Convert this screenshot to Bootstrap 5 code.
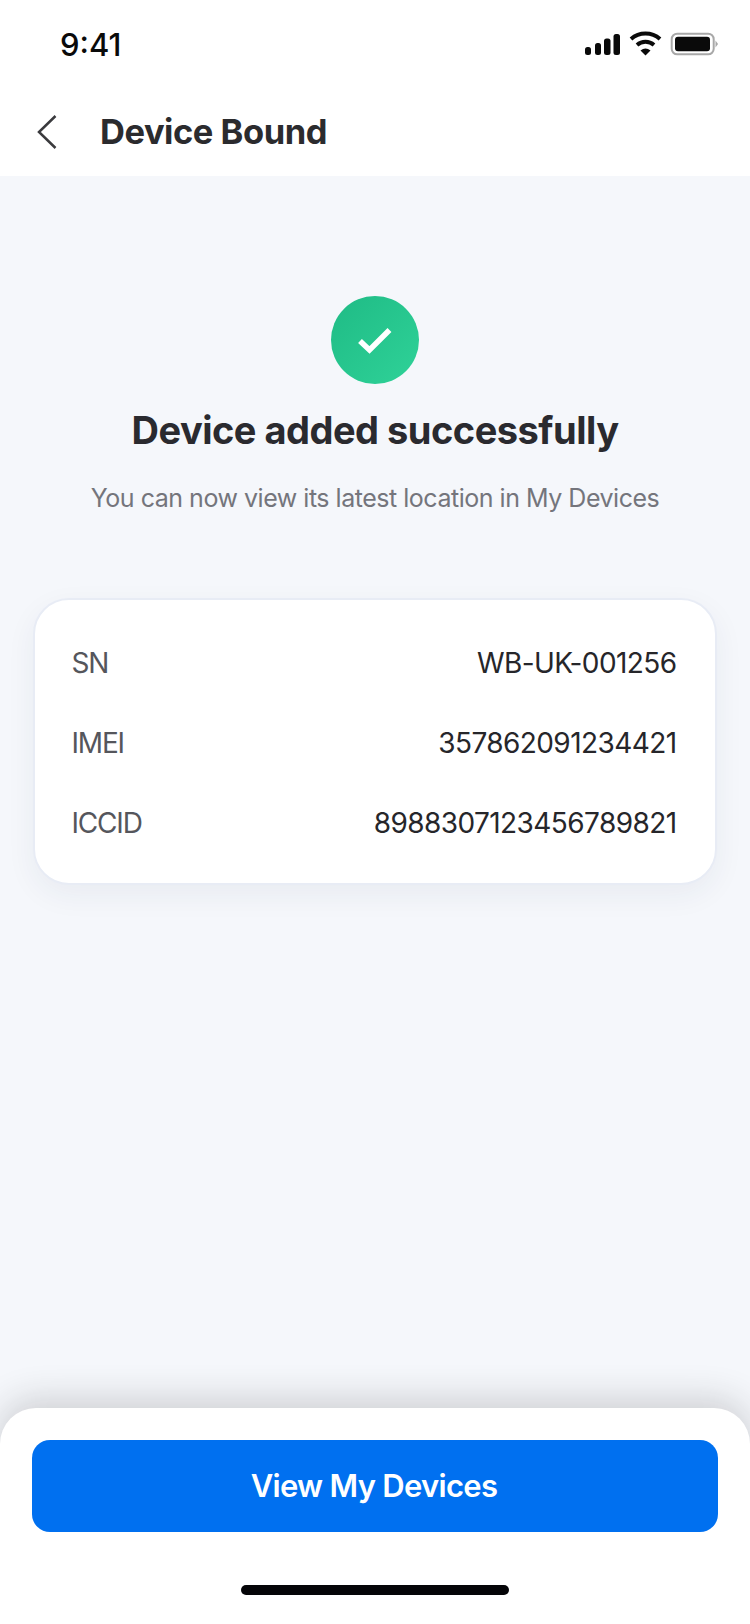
<!DOCTYPE html>
<html lang="en">
<head>
<meta charset="utf-8">
<title>Device Bound</title>
<link href="https://cdn.jsdelivr.net/npm/bootstrap@5.3.0/dist/css/bootstrap.min.css" rel="stylesheet">
<style>
html, body { margin: 0; height: 1624px; overflow: hidden; }
body { font-family: Inter, "Liberation Sans", sans-serif; background: #f5f7fb; }
.screen { width: 750px; height: 1624px; }
.status-strip { height: 88px; padding: 0 30px 0 60px; padding-top: 21px; }
.clock { font-size: 31px; font-weight: 500; color: #0a0a0a; line-height: 48px; letter-spacing: 0; }
.status-icons { margin: 10px 1px 0 0; }
.top-head { height: 88px; padding-left: 36px; }
.back-link { width: 24px; line-height: 0; margin-right: 40px; }
.head-title { font-size: 34.5px; font-weight: 700; color: #2b2b2e; letter-spacing: -0.47px; margin: 0; }
.body-area { padding: 120px 33px 0; }
.ok-disc { width: 88px; height: 88px; border-radius: 50%; background: linear-gradient(135deg, #1fbb85, #2fd298); }
.done-title { font-size: 38px; font-weight: 700; color: #2a2a2f; letter-spacing: -0.5px; line-height: 48px; margin: 22px 0 0; }
.done-sub { font-size: 25px; color: #74757c; letter-spacing: -0.48px; line-height: 36px; margin: 26px 0 0; }
.info-panel { margin-top: 82px; height: 287px; border: 2px solid #e8ecf5; border-radius: 36px; padding: 23px 38.5px 0 36.5px; box-shadow: 0 10px 30px rgba(40, 50, 80, .06); }
.info-row { height: 80px; }
.info-key { font-size: 28px; color: #55565c; letter-spacing: -1.2px; }
.info-val { font-size: 28px; font-weight: 400; color: #26262a; letter-spacing: -0.58px; }
.bottom-sheet { height: 216px; border-radius: 36px 36px 0 0; padding: 32px 32px 0; box-shadow: 0 -8px 36px rgba(30, 30, 30, .19); }
.go-btn { height: 92px; border-radius: 18px; background: #0070f0; border: 0; color: #fff; font-size: 31px; font-weight: 600; letter-spacing: -0.7px; padding-right: 14px; }
.go-btn:hover { background: #0070f0; color: #fff; }
.home-pill { width: 268px; height: 10px; border-radius: 5px; background: #050508; margin: 53px auto 0; }
</style>
</head>
<body>
<div class="screen d-flex flex-column">
  <div class="bg-white">
    <div class="status-strip d-flex justify-content-between align-items-start">
      <span class="clock">9:41</span>
      <!-- signal, wifi and battery indicators -->
      <svg class="status-icons" width="140" height="30" viewBox="0 0 140 30" aria-hidden="true">
        <rect x="6" y="16" width="6" height="8" rx="2.5" fill="#0a0a0a"/>
        <rect x="16" y="12" width="6" height="12" rx="2.5" fill="#0a0a0a"/>
        <rect x="25" y="7.500" width="6.5" height="16.5" rx="2.5" fill="#0a0a0a"/>
        <rect x="34.500" y="3" width="6.5" height="21" rx="2.5" fill="#0a0a0a"/>
        <path d="M52 8 a22 22 0 0 1 29 0" fill="none" stroke="#0a0a0a" stroke-width="4"/>
        <path d="M58 14 a13 13 0 0 1 17 0" fill="none" stroke="#0a0a0a" stroke-width="4"/>
        <path d="M61.500 19.500 a8 8 0 0 1 10 0 L66.500 24.500 Z" fill="#0a0a0a"/>
        <rect x="92.700" y="2.700" width="42" height="20.600" rx="5.500" fill="none" stroke="#a8a8a8" stroke-width="2"/>
        <rect x="96" y="5.700" width="35" height="14.600" rx="3" fill="#0a0a0a"/>
        <path d="M136.500 9.500 L139 13 L136.500 16.500 Z" fill="#a8a8a8"/>
      </svg>
    </div>
    <div class="top-head d-flex align-items-center">
      <a class="back-link" href="#" aria-label="Back">
        <svg width="24" height="36" viewBox="0 0 24 36" aria-hidden="true"><path d="M19.500 2 L3 18 L19.500 34" fill="none" stroke="#3a3a3d" stroke-width="2.500"/></svg>
      </a>
      <h1 class="head-title">Device Bound</h1>
    </div>
  </div>

  <main class="body-area flex-grow-1">
    <div class="text-center">
      <div class="ok-disc d-flex align-items-center justify-content-center mx-auto">
        <svg width="36" height="28" viewBox="0 0 36 28" aria-hidden="true"><path d="M3 15 L12.500 24 L32.500 4" fill="none" stroke="#fff" stroke-width="5.500"/></svg>
      </div>
      <h2 class="done-title">Device added successfully</h2>
      <p class="done-sub">You can now view its latest location in My Devices</p>
    </div>
    <div class="info-panel bg-white">
      <div class="info-row d-flex justify-content-between align-items-center"><span class="info-key">SN</span><span class="info-val">WB-UK-001256</span></div>
      <div class="info-row d-flex justify-content-between align-items-center"><span class="info-key">IMEI</span><span class="info-val">357862091234421</span></div>
      <div class="info-row d-flex justify-content-between align-items-center"><span class="info-key">ICCID</span><span class="info-val">8988307123456789821</span></div>
    </div>
  </main>

  <footer class="bottom-sheet bg-white">
    <button type="button" class="btn go-btn w-100">View My Devices</button>
    <div class="home-pill"></div>
  </footer>
</div>
</body>
</html>
